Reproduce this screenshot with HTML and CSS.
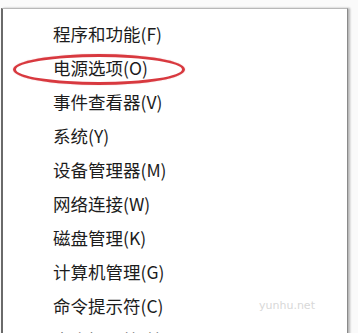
FILE: index.html
```html
<!DOCTYPE html>
<html lang="zh-CN">
<head>
<meta charset="utf-8">
<link rel="stylesheet" href="styles.css">
</head>
<body>
<div class="page">
  <ul class="menu">
    <li class="item">程序和功能(F)</li>
    <li class="item item-marked">电源选项(O)<span class="ring"></span></li>
    <li class="item">事件查看器(V)</li>
    <li class="item">系统(Y)</li>
    <li class="item">设备管理器(M)</li>
    <li class="item">网络连接(W)</li>
    <li class="item">磁盘管理(K)</li>
    <li class="item">计算机管理(G)</li>
    <li class="item">命令提示符(C)</li>
    <li class="item item-faded">命令提示符(管理员)(A)</li>
  </ul>
  <span class="watermark">yunhu.net</span>
</div>
</body>
</html>
```
FILE: styles.css
```css
html, body {
  margin: 0;
  padding: 0;
  background: #ffffff;
}
.page {
  position: relative;
  width: 358px;
  height: 333px;
  overflow: hidden;
  background: #fafafa;
  padding-top: 8px;
  box-sizing: border-box;
}
.menu {
  list-style: none;
  margin: 0 0 0 1px;
  padding: 8px 0 0 0;
  width: 344px;
  height: 400px;
  background: #ffffff;
  border-top: 1px solid #b8b8b8;
  border-left: 2px solid #6a6a6a;
  border-right: 1px solid #8a8a8a;
  box-shadow: 2px 0 2px rgba(0, 0, 0, 0.28);
  font-family: "Noto Sans CJK SC", "Noto Sans", sans-serif;
  font-size: 17.5px;
  font-weight: 400;
  color: #1c1c1c;
}
.item {
  position: relative;
  height: 34px;
  line-height: 34px;
  padding-left: 50px;
  white-space: nowrap;
}
.item-faded {
  color: #555;
}
.ring {
  position: absolute;
  left: 10px;
  top: 3px;
  width: 166px;
  height: 25px;
  border: 3px solid #d8393f;
  border-radius: 50%;
  box-shadow: 0 0 1px rgba(216, 57, 63, 0.6);
}
.watermark {
  position: absolute;
  left: 259px;
  top: 299px;
  font-family: "DejaVu Sans", sans-serif;
  font-size: 11px;
  color: #d8d8d8;
}
```
